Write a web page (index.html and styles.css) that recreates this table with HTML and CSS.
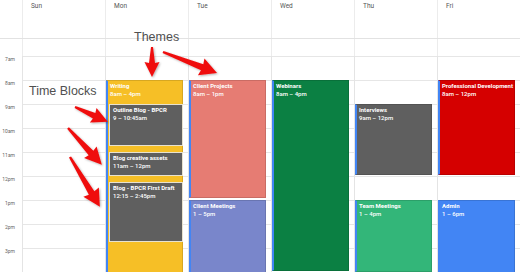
FILE: index.html
```html
<!DOCTYPE html>
<html>
<head>
<meta charset="utf-8">
<link rel="stylesheet" href="styles.css">
</head>
<body>
<div class="cal">
  <div class="row head">
    <div class="gut"></div>
    <div class="day">Sun</div>
    <div class="day">Mon</div>
    <div class="day">Tue</div>
    <div class="day">Wed</div>
    <div class="day">Thu</div>
    <div class="day">Fri</div>
  </div>
  <div class="row allday">
    <div class="gut"></div>
    <div class="cell"></div>
    <div class="cell"></div>
    <div class="cell"></div>
    <div class="cell"></div>
    <div class="cell"></div>
    <div class="cell"></div>
  </div>
  <div class="row grid">
    <div class="gut times">
      <span>7am</span><span>8am</span><span>9am</span><span>10am</span><span>11am</span><span>12pm</span><span>1pm</span><span>2pm</span><span>3pm</span>
    </div>
    <div class="col"></div>
    <div class="col">
      <div class="ev yellow" style="top:24px;height:194px"><b>Writing</b><span>8am – 4pm</span></div>
      <div class="ev inner" style="top:48px;height:42px"><b>Outline Blog - BPCR</b><span>9 – 10:45am</span></div>
      <div class="ev inner" style="top:96px;height:24px"><b>Blog creative assets</b><span>11am – 12pm</span></div>
      <div class="ev inner" style="top:126px;height:60px"><b>Blog - BPCR First Draft</b><span>12:15 – 2:45pm</span></div>
    </div>
    <div class="col">
      <div class="ev salmon" style="top:24px;height:118px"><b>Client Projects</b><span>8am – 1pm</span></div>
      <div class="ev lavender" style="top:144px;height:96px"><b>Client Meetings</b><span>1 – 5pm</span></div>
    </div>
    <div class="col">
      <div class="ev green" style="top:24px;height:191px"><b>Webinars</b><span>8am – 4pm</span></div>
    </div>
    <div class="col">
      <div class="ev gray" style="top:48px;height:71px"><b>Interviews</b><span>9am – 12pm</span></div>
      <div class="ev sage" style="top:144px;height:72px"><b>Team Meetings</b><span>1 – 4pm</span></div>
    </div>
    <div class="col">
      <div class="ev red" style="top:24px;height:95px"><b>Professional Development</b><span>8am – 12pm</span></div>
      <div class="ev blue" style="top:144px;height:120px"><b>Admin</b><span>1 – 6pm</span></div>
    </div>
  </div>

  <div class="note themes">Themes</div>
  <div class="note blocks">Time Blocks</div>

  <svg class="arrows" width="520" height="272" viewBox="0 0 520 272">
    <defs>
      <filter id="sh" x="-30%" y="-30%" width="160%" height="160%">
        <feDropShadow dx="1" dy="1" stdDeviation="0.8" flood-color="#000" flood-opacity="0.3"/>
      </filter>
      <path id="a30" d="M0,-1 L16,-3 L15,-7.5 L30,0 L15,7.5 L16,3 L0,1 Z"/>
      <path id="a58" d="M0,-1.2 L42,-3.2 L41,-9 L58,0 L41,9 L42,3.2 L0,1.2 Z"/>
      <path id="a36" d="M0,-1 L21,-3 L20,-8 L36,0 L20,8 L21,3 L0,1 Z"/>
      <path id="a50" d="M0,-1.2 L34,-3.2 L33,-8.5 L50,0 L33,8.5 L34,3.2 L0,1.2 Z"/>
    </defs>
    <g fill="#ef1010" filter="url(#sh)">
      <use href="#a30" transform="translate(152 47) rotate(90)"/>
      <use href="#a58" transform="translate(163 52) rotate(21.3)"/>
      <use href="#a36" transform="translate(75 107) rotate(24.4)"/>
      <use href="#a50" transform="translate(68 128) rotate(47.4)"/>
      <use href="#a58" transform="translate(70 157) rotate(59)"/>
    </g>
  </svg>
</div>
</body>
</html>
```

FILE: styles.css
```css
* { box-sizing: border-box; }
html, body { margin: 0; padding: 0; background: #fff; }
.cal {
  position: relative;
  width: 520px;
  height: 272px;
  overflow: hidden;
  font-family: Roboto, "Liberation Sans", Arial, sans-serif;
}
.row {
  display: grid;
  grid-template-columns: 22px repeat(6, 83px);
}
.head {
  height: 39px;
  border-bottom: 1px solid #e2e2e2;
}
.day {
  border-left: 1px solid #ececec;
  padding: 3px 0 0 8px;
  font-size: 6.5px;
  line-height: 7px;
  color: #555;
}
.allday { height: 17px; }
.cell { border-left: 1px solid #ececec; }
.grid { height: 216px; }
.times {
  display: flex;
  flex-direction: column;
  align-items: flex-end;
  padding-right: 7px;
}
.times span {
  display: block;
  height: 24px;
  flex: none;
  font-size: 5px;
  line-height: 6px;
  color: #666;
}
.col {
  position: relative;
  border-left: 1px solid #e4e4e4;
  background-image: linear-gradient(#e6e6e6 1px, transparent 1px);
  background-size: 100% 24px;
}
.ev {
  position: absolute;
  left: 0;
  width: 77px;
  border: 1px solid rgba(0,0,0,0.12);
  border-left: 2px solid #4285f4;
  padding: 1px 2px 0 2px;
  color: #fff;
  font-size: 6px;
  line-height: 8px;
  overflow: hidden;
  display: flex;
  flex-direction: column;
}
.ev b { font-weight: 700; white-space: nowrap; }
.ev span { font-weight: 500; white-space: nowrap; }
.yellow { background: #f6bf26; }
.inner {
  left: 3px;
  width: 74px;
  background: #5f5f5f;
  border: 1px solid #e8e2cf;
  border-left: 1px solid #d9e4f7;
  padding: 1px 3px 0 3px;
}
.salmon { background: #e67c73; }
.lavender { background: #7986cb; }
.green { background: #0b8043; }
.gray { background: #5f5f5f; }
.sage { background: #33b679; }
.red { background: #d50000; }
.blue { background: #4285f4; }
.note {
  position: absolute;
  font-family: "Liberation Sans", Arial, sans-serif;
  font-size: 12.5px;
  color: #505050;
  line-height: 14px;
}
.themes { left: 134px; top: 30px; }
.blocks { left: 29px; top: 84px; }
.arrows {
  position: absolute;
  left: 0;
  top: 0;
  pointer-events: none;
}
```
